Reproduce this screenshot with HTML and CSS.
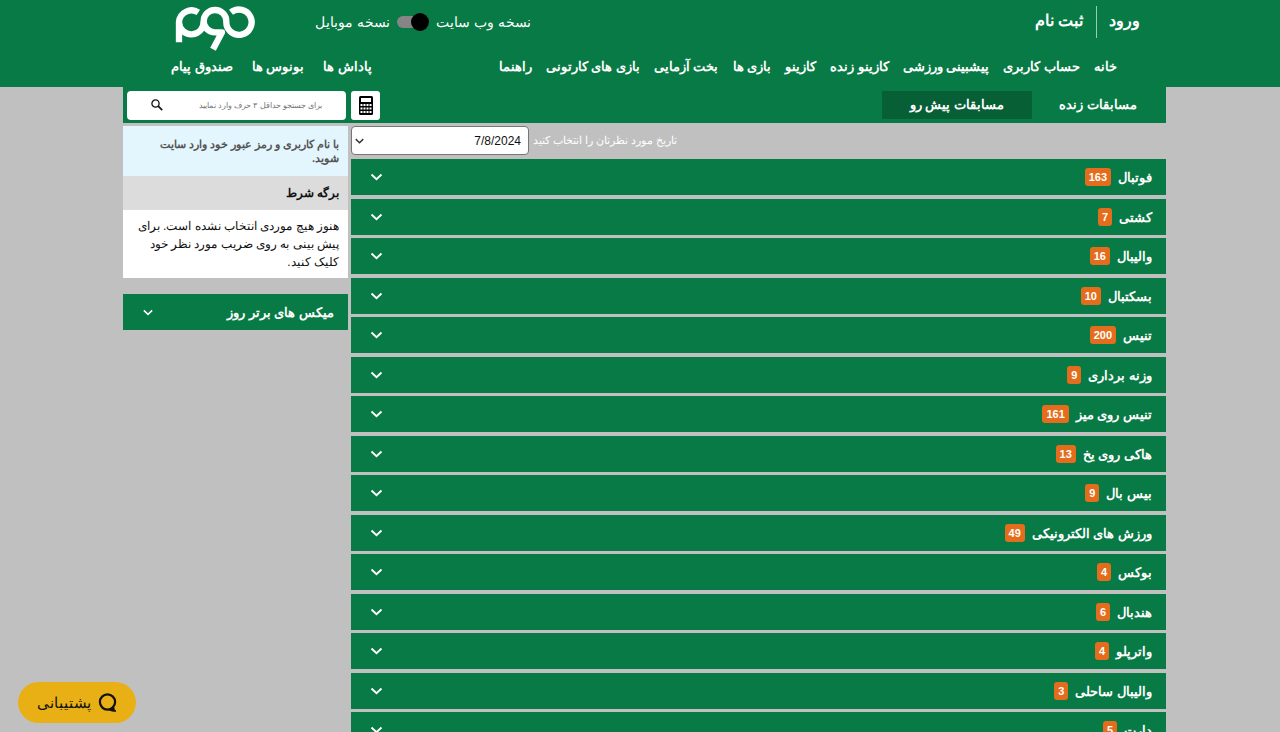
FILE: index.html
```html
<!DOCTYPE html>
<html lang="fa" dir="rtl">
<head>
<meta charset="utf-8">
<title>مسابقات پیش رو</title>
<link rel="stylesheet" href="styles.css">
</head>
<body>
<svg class="sprite" aria-hidden="true">
  <symbol id="chevron" viewBox="0 0 12 8"><path d="M1 1.5 6 6.2 11 1.5" fill="none" stroke="currentColor" stroke-width="1.9"/></symbol>
</svg>

<header class="header">
  <div class="header-top">
    <div class="auth">
      <a href="#" class="auth-link">ورود</a>
      <a href="#" class="auth-link">ثبت نام</a>
    </div>
    <label class="version">
      <span>نسخه وب سایت</span>
      <input type="checkbox" class="switch" role="switch">
      <span>نسخه موبایل</span>
    </label>
    <a href="#" class="logo" aria-label="دوم">
      <svg viewBox="22 12 246 138" width="82" height="46" fill="none" stroke="#fff" stroke-width="19">
        <path d="M34 121V60A38 38 0 0 1 92 31"/>
        <path d="M34 62A37 37 0 0 0 108 58A34 34 0 0 1 176 58A38 38 0 1 0 190 31"/>
        <path d="M108 58A34 34 0 0 0 142 91H163L136 142" stroke-linejoin="round"/>
      </svg>
    </a>
  </div>
  <div class="header-bottom">
    <nav class="nav">
      <a href="#">خانه</a>
      <a href="#">حساب کاربری</a>
      <a href="#">پیشبینی ورزشی</a>
      <a href="#">کازینو زنده</a>
      <a href="#">کازینو</a>
      <a href="#">بازی ها</a>
      <a href="#">بخت آزمایی</a>
      <a href="#">بازی های کارتونی</a>
      <a href="#">راهنما</a>
    </nav>
    <nav class="nav nav-side">
      <a href="#">پاداش ها</a>
      <a href="#">بونوس ها</a>
      <a href="#">صندوق پیام</a>
    </nav>
  </div>
</header>

<div class="page">
  <div class="toolbar">
    <nav class="tabs">
      <a href="#" class="tab">مسابقات زنده</a>
      <a href="#" class="tab tab-active" aria-current="page">مسابقات پیش رو</a>
    </nav>
    <button class="calc" aria-label="ماشین حساب">
      <svg viewBox="0 0 14 19" width="14" height="19">
        <rect width="14" height="19" rx="1.5" fill="#000"/>
        <path fill="#fff" d="M2 2h10v4H2zM1.500 8h2v2h-2zM4.500 8h2v2h-2zM7.500 8h2v2h-2zM10.500 8h2v2h-2zM1.500 11.500h2v2h-2zM4.500 11.500h2v2h-2zM7.500 11.500h2v2h-2zM10.500 11.500h2v2h-2zM1.500 15h2v2h-2zM4.500 15h2v2h-2zM7.500 15h2v2h-2zM10.500 15h2v2h-2z"/>
      </svg>
    </button>
    <form class="search">
      <input type="text" class="search-input" aria-label="جستجو" placeholder="برای جستجو حداقل ۳ حرف وارد نمایید">
      <button type="button" class="search-button" aria-label="جستجو">
        <svg viewBox="0 0 12 12" width="12" height="12" fill="none" stroke="#111"><circle cx="4.500" cy="4.500" r="3.600" stroke-width="1.300"/><path d="M7.200 7.200l4 4" stroke-width="1.700"/></svg>
      </button>
    </form>
  </div>

  <div class="columns">
    <main class="main">
      <div class="date-row">
        <label for="date">تاریخ مورد نظرتان را انتخاب کنید</label>
        <div class="select-box">
          <select id="date" class="date-select"><option>7/8/2024</option></select>
          <svg class="select-arrow" width="9" height="6"><use href="#chevron"/></svg>
        </div>
      </div>
      <div class="sports">
        <button class="sport"><span>فوتبال</span><span class="count">163</span><svg class="chevron"><use href="#chevron"/></svg></button>
        <button class="sport"><span>کشتی</span><span class="count">7</span><svg class="chevron"><use href="#chevron"/></svg></button>
        <button class="sport"><span>والیبال</span><span class="count">16</span><svg class="chevron"><use href="#chevron"/></svg></button>
        <button class="sport"><span>بسکتبال</span><span class="count">10</span><svg class="chevron"><use href="#chevron"/></svg></button>
        <button class="sport"><span>تنیس</span><span class="count">200</span><svg class="chevron"><use href="#chevron"/></svg></button>
        <button class="sport"><span>وزنه برداری</span><span class="count">9</span><svg class="chevron"><use href="#chevron"/></svg></button>
        <button class="sport"><span>تنیس روی میز</span><span class="count">161</span><svg class="chevron"><use href="#chevron"/></svg></button>
        <button class="sport"><span>هاکی روی یخ</span><span class="count">13</span><svg class="chevron"><use href="#chevron"/></svg></button>
        <button class="sport"><span>بیس بال</span><span class="count">9</span><svg class="chevron"><use href="#chevron"/></svg></button>
        <button class="sport"><span>ورزش های الکترونیکی</span><span class="count">49</span><svg class="chevron"><use href="#chevron"/></svg></button>
        <button class="sport"><span>بوکس</span><span class="count">4</span><svg class="chevron"><use href="#chevron"/></svg></button>
        <button class="sport"><span>هندبال</span><span class="count">6</span><svg class="chevron"><use href="#chevron"/></svg></button>
        <button class="sport"><span>واترپلو</span><span class="count">4</span><svg class="chevron"><use href="#chevron"/></svg></button>
        <button class="sport"><span>والیبال ساحلی</span><span class="count">3</span><svg class="chevron"><use href="#chevron"/></svg></button>
        <button class="sport"><span>دارت</span><span class="count">5</span><svg class="chevron"><use href="#chevron"/></svg></button>
      </div>
    </main>

    <aside class="sidebar">
      <p class="notice">با نام کاربری و رمز عبور خود وارد سایت شوید.</p>
      <h2 class="slip-title">برگه شرط</h2>
      <p class="slip-text">هنوز هیچ موردی انتخاب نشده است. برای پیش بینی به روی ضریب مورد نظر خود کلیک کنید.</p>
      <button class="mixes"><span>میکس های برتر روز</span><svg class="mixes-chevron"><use href="#chevron"/></svg></button>
    </aside>
  </div>
</div>

<button class="support">
  <svg viewBox="0 0 20 20" width="20" height="20" fill="none" stroke="#111" stroke-width="2.200"><circle cx="9.500" cy="9" r="7.600"/><path d="M10 16.500Q14 18.800 18 18.200 15.800 17 15.600 14" fill="#111" stroke-width="1"/></svg>
  <span>پشتیبانی</span>
</button>
</body>
</html>
```
FILE: styles.css
```css
* { box-sizing: border-box; }

html, body { height: 100%; }

body {
  margin: 0;
  overflow: hidden;
  background: #c0c0c0;
  color: #111;
  font-family: "Liberation Sans", Arial, sans-serif;
  font-size: 12px;
}

a { color: inherit; text-decoration: none; }

button {
  border: 0;
  margin: 0;
  padding: 0;
  color: inherit;
  font-family: inherit;
  cursor: pointer;
}

.sprite { position: absolute; width: 0; height: 0; }

/* Header */
.header {
  height: 87px;
  background: #087a45;
  color: #fff;
}

.header-top {
  display: flex;
  height: 52px;
  padding: 0 140px 0 175px;
}

.header-bottom {
  display: flex;
  justify-content: space-between;
  padding: 0 163px 0 171px;
}

.auth { display: flex; flex: 1; padding-top: 6px; }

.auth-link {
  height: 32px;
  line-height: 30px;
  font-size: 16px;
  font-weight: 700;
}

.auth-link + .auth-link {
  margin-right: 12px;
  padding-right: 13px;
  border-right: 1px solid #9ccbb4;
}

.nav {
  display: flex;
  gap: 14px;
  line-height: 30px;
  font-size: 13px;
  font-weight: 700;
  white-space: nowrap;
}

.nav-side { gap: 19px; }

.version {
  display: flex;
  align-items: center;
  gap: 7px;
  height: 43px;
  font-size: 14px;
  white-space: nowrap;
}

.switch {
  appearance: none;
  position: relative;
  width: 32px;
  height: 12px;
  margin: 0;
  border-radius: 6px;
  background: #858585;
}

.switch::before {
  content: "";
  position: absolute;
  top: -3px;
  right: 0;
  width: 18px;
  height: 18px;
  border-radius: 50%;
  background: #000;
}

.logo { padding-top: 6px; margin-right: 58px; }
.logo svg { display: block; }

/* Page */
.page { padding: 0 114px 0 123px; }

.toolbar {
  display: flex;
  align-items: center;
  height: 36px;
  padding: 0 0 0 4px;
  background: #087a45;
  color: #fff;
}

.tabs { display: flex; flex: 1; gap: 2px; padding-right: 4px; }

.tab {
  width: 128px;
  text-align: center;
  line-height: 28px;
  font-size: 13px;
  font-weight: 700;
}

.tab-active { width: 150px; background: #065f35; }

.calc {
  display: flex;
  align-items: center;
  justify-content: center;
  width: 29px;
  height: 29px;
  margin-left: 5px;
  border-radius: 3px;
  background: #fff;
}

.search {
  display: flex;
  align-items: center;
  width: 219px;
  height: 29px;
  padding: 0 24px;
  border-radius: 4px;
  background: #fff;
}

.search-input {
  flex: 1;
  min-width: 0;
  padding: 0;
  border: 0;
  outline: 0;
  background: none;
  font-family: inherit;
  font-size: 8px;
}

.search-input::placeholder { color: #777; }
.search-button { display: flex; background: none; }

.columns { display: flex; align-items: flex-start; gap: 3px; padding-top: 3px; }

/* Match list */
.main { flex: 1; min-width: 0; }

.date-row {
  display: flex;
  justify-content: flex-end;
  align-items: center;
  gap: 4px;
  height: 33px;
  padding-bottom: 4px;
  color: #fff;
  font-size: 11px;
}

.select-box { position: relative; width: 178px; height: 29px; }

.date-select {
  appearance: none;
  width: 100%;
  height: 100%;
  padding: 0 7px;
  border: 1px solid #767676;
  border-radius: 4px;
  background: #fff;
  color: #111;
  font-family: inherit;
  font-size: 12px;
}

.select-arrow { position: absolute; left: 4px; top: 12px; color: #333; pointer-events: none; }

.sports { display: flex; flex-direction: column; }

.sport, .mixes {
  display: flex;
  align-items: center;
  width: 100%;
  height: 36px;
  background: #087a45;
  color: #fff;
  font-size: 13px;
  font-weight: 700;
}

.sport { gap: 7px; margin-bottom: 3px; padding: 0 14px 0 19px; }
.sport:nth-child(odd) { margin-bottom: 4px; }

.count {
  padding: 0 4px;
  border-radius: 3px;
  background: #e36d1c;
  line-height: 18px;
  font-size: 11px;
}

.chevron { width: 13px; height: 8px; margin-right: auto; }

/* Sidebar */
.sidebar { width: 225px; }

.notice, .slip-title, .slip-text { margin: 0; padding: 0 9px; }

.notice {
  padding-top: 11px;
  padding-bottom: 11px;
  background: #e3f6fd;
  color: #555;
  line-height: 14px;
  font-size: 11px;
  font-weight: 700;
}

.slip-title {
  background: #dcdcdc;
  line-height: 34px;
  font-size: 12px;
}

.slip-text {
  padding-top: 7px;
  padding-bottom: 7px;
  margin-bottom: 16px;
  background: #fff;
  line-height: 18px;
  font-size: 12px;
}

.mixes { justify-content: space-between; padding: 0 14px 0 20px; }
.mixes-chevron { width: 10px; height: 7px; }

/* Support chat */
.support {
  position: fixed;
  left: 18px;
  bottom: 9px;
  display: flex;
  align-items: center;
  justify-content: center;
  gap: 7px;
  width: 118px;
  height: 41px;
  border-radius: 21px;
  background: #e8b014;
  font-size: 15px;
}
```
